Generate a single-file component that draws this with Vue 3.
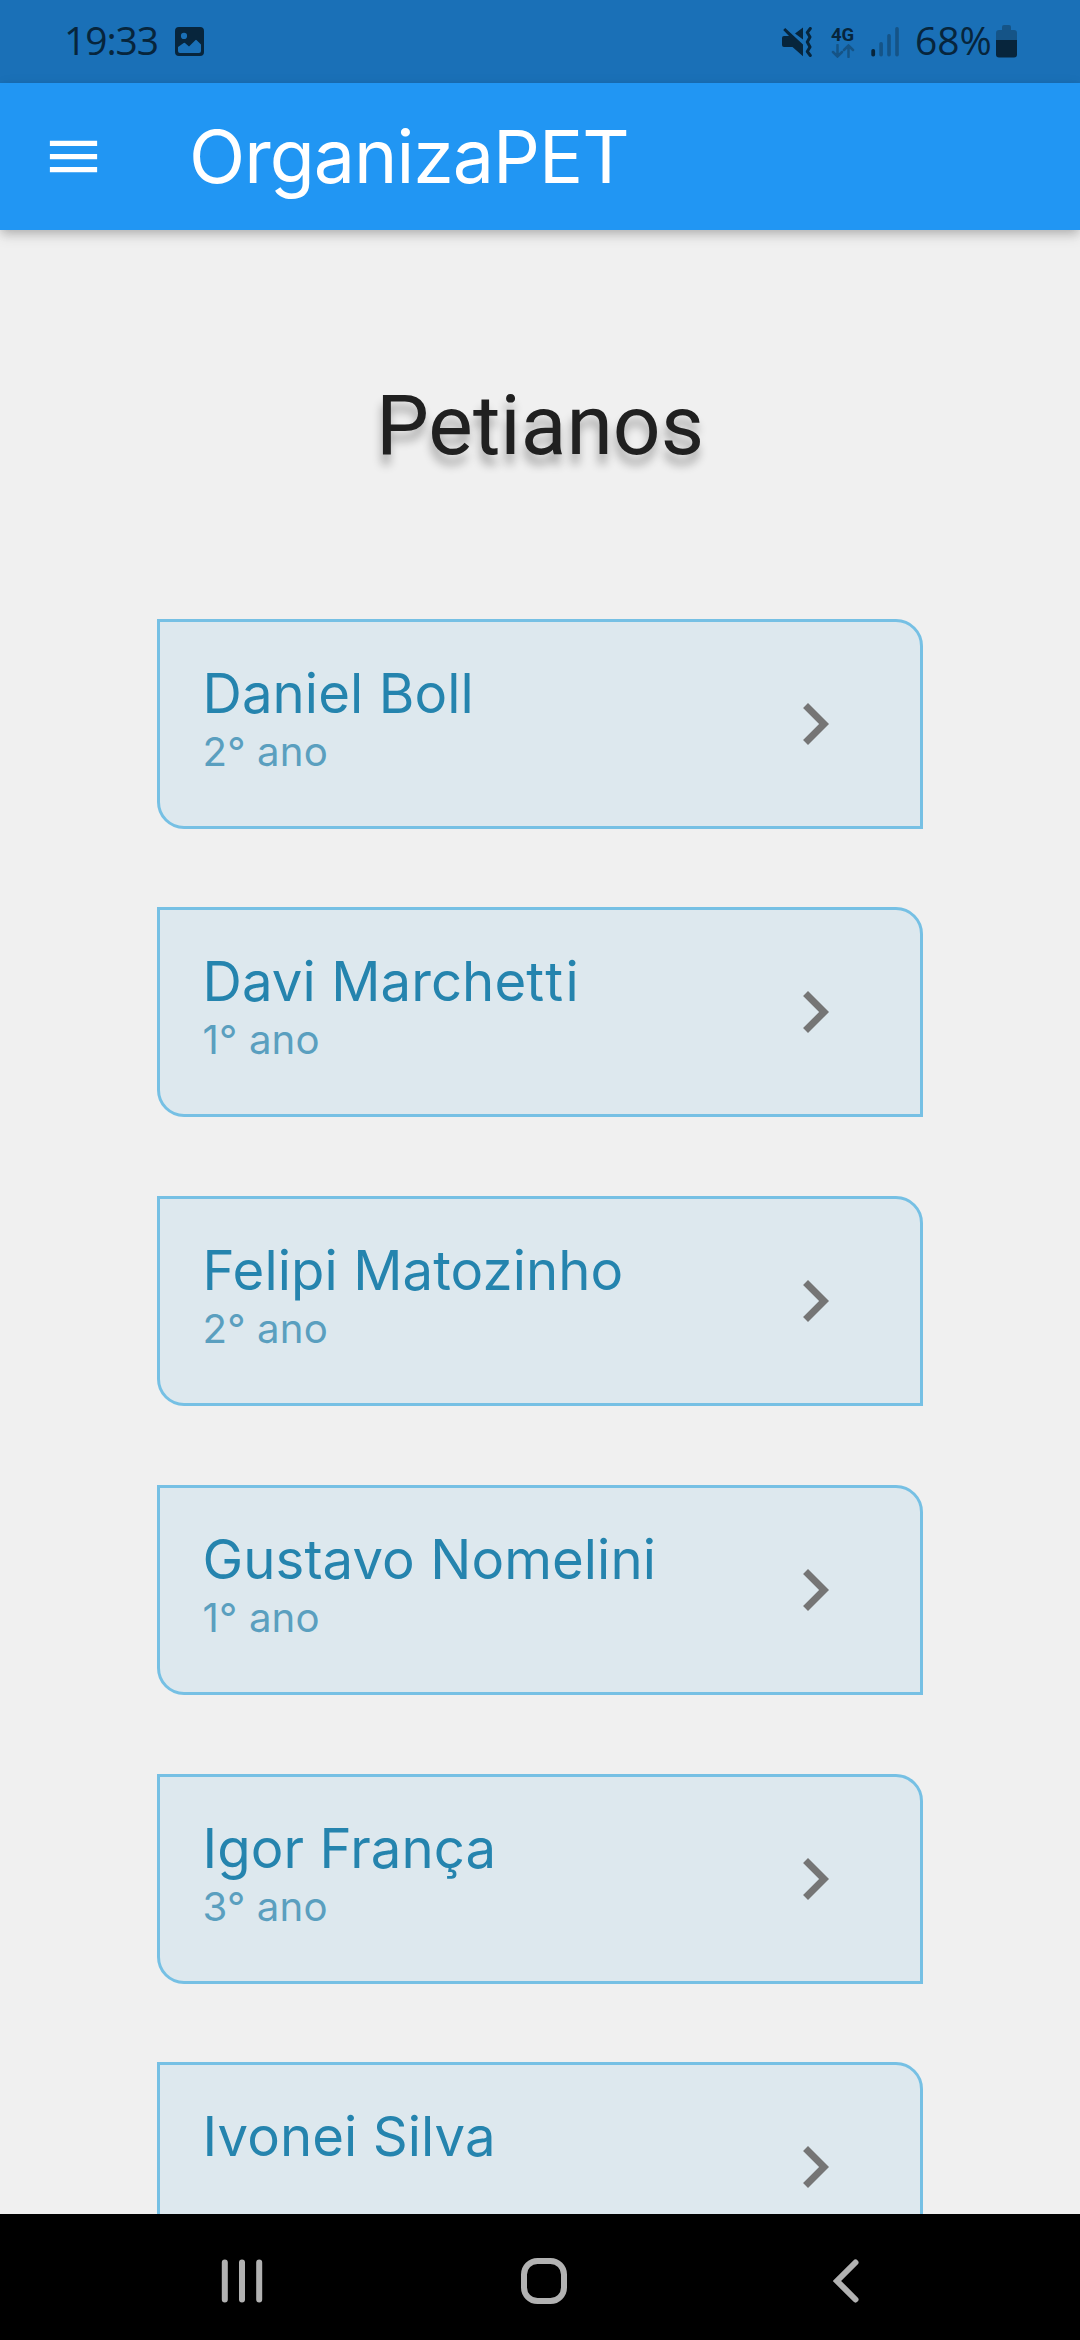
<script setup>
const people = [
  { name: ['Daniel Boll'], year: '2° ano' },
  { name: ['Davi Marche', 'tt', 'i'], year: '1° ano' },
  { name: ['Felipi Matozinho'], year: '2° ano' },
  { name: ['Gustavo Nomelini'], year: '1° ano' },
  { name: ['Igor França'], year: '3° ano' },
  { name: ['Ivonei Silva'], year: '' }
]
</script>

<template>
  <div class="screen">
    <header class="status">
      <span class="clock">19:33</span>
      <svg class="picture" width="30" height="30" viewBox="0 0 30 30">
        <path fill-rule="evenodd" d="M4 0h21a4 4 0 0 1 4 4v21a4 4 0 0 1-4 4H4a4 4 0 0 1-4-4V4a4 4 0 0 1 4-4zM9 5.8a3.1 3.1 0 1 0 0 6.2a3.1 3.1 0 1 0 0-6.2zM3 20v4a2 2 0 0 0 2 2h19a2 2 0 0 0 2-2v-6.5l-4.3-4.3a1 1 0 0 0-1.4 0L14 19.500l-4-3.500a1 1 0 0 0-1.300 0z" />
      </svg>
      <span class="spacer"></span>
      <svg class="mute" width="30" height="30" viewBox="0 0 30 30">
        <path d="M0 11a2 2 0 0 1 2-2h5L1.200 3 3.200 1 21 17.500V29.200L10.500 20H2a2 2 0 0 1-2-2zM21 0.500V12.500L13 6.500z" />
        <path class="wave" d="M28.300 1.500L25.300 5.500L28 10L25.300 15L28 20L25.300 24.500L28.300 28.500" />
      </svg>
      <div class="network">
        <span class="gen">4G</span>
        <svg width="24" height="14" viewBox="0 0 24 14">
          <path class="arrows" d="M6.500 1v11M2 8l4.500 4.500L11 8M17.500 13V2M13 6l4.500-4.500L22 6" />
        </svg>
      </div>
      <svg class="signal" width="29" height="30" viewBox="0 0 29 30">
        <rect x="0.300" y="22" width="3.800" height="7.500" rx="1.700" />
        <g class="faint">
          <rect x="8.300" y="15" width="3.600" height="14.500" rx="1.700" />
          <rect x="16.200" y="7" width="3.600" height="22.500" rx="1.700" />
          <rect x="24.200" y="0" width="3.600" height="29.500" rx="1.700" />
        </g>
      </svg>
      <span class="percent">68%</span>
      <svg class="battery" width="21" height="33" viewBox="0 0 21 33">
        <path class="faint" d="M6 2a2 2 0 0 1 2-2h5a2 2 0 0 1 2 2v3h3a3 3 0 0 1 3 3v8H0V8a3 3 0 0 1 3-3h3z" />
        <path d="M0 15h21v14.500a3 3 0 0 1-3 3H3a3 3 0 0 1-3-3z" />
      </svg>
    </header>

    <nav class="appbar">
      <svg width="63" height="63" viewBox="0 0 24 24"><path d="M3 18h18v-2H3v2zm0-5h18v-2H3v2zm0-7v2h18V6H3z" /></svg>
      <span class="brand">OrganizaPET</span>
    </nav>

    <main class="content">
      <h1>Petianos</h1>
      <ul class="list">
        <li v-for="p in people" :key="p.name[0]" class="card">
          <div class="info">
            <div class="name"><span v-for="(part, i) in p.name" :key="i" :class="{ loose: part === 'tt' }">{{ part }}</span></div>
            <div class="year">{{ p.year }}</div>
          </div>
          <svg width="84" height="84" viewBox="0 0 24 24"><path d="M10 6L8.590 7.410 13.170 12l-4.580 4.590L10 18l6-6z" /></svg>
        </li>
      </ul>
    </main>

    <footer class="navbar">
      <svg width="42" height="46" viewBox="0 0 42 46"><path d="M3.800 4.500v37M21 4.500v37M38.200 4.500v37" /></svg>
      <svg class="home" width="46" height="46" viewBox="0 0 46 46"><rect x="3" y="3" width="40" height="40" rx="13.500" /></svg>
      <svg class="back" width="28" height="46" viewBox="0 0 28 46"><path d="M23.500 4.500L5 23l18.500 18.500" /></svg>
    </footer>
  </div>
</template>

<style>
body {
  background: #f0f0f0;
}
</style>

<style scoped>
.screen {
  display: flex;
  flex-direction: column;
  width: 1080px;
  height: 2340px;
  overflow: hidden;
  background: #f0f0f0;
  font-family: Inter, sans-serif;
}
.status {
  display: flex;
  align-items: center;
  flex: none;
  box-sizing: border-box;
  height: 83px;
  padding: 0 63px 0 64px;
  background: #1a70b7;
  color: #07253c;
  fill: #07253c;
}
.status svg {
  display: block;
}
.clock,
.percent {
  font: 400 39px/54px "Open Sans", sans-serif;
  letter-spacing: -1.100px;
  white-space: nowrap;
  margin-top: -4px;
}
.clock {
  width: 111px;
}
.spacer {
  flex: 1;
}
.wave {
  fill: none;
  stroke: #07253c;
  stroke-width: 3;
  stroke-linecap: round;
  stroke-linejoin: round;
}
.network {
  display: flex;
  flex-direction: column;
  width: 25px;
  margin-left: 19px;
  margin-top: 1px;
}
.gen {
  font: 700 18.500px/18px Roboto, sans-serif;
}
.arrows {
  fill: none;
  stroke: #155487;
  stroke-width: 2.500;
  stroke-linecap: round;
}
.signal {
  margin-left: 15px;
}
.faint {
  fill: #155487;
}
.percent {
  width: 81px;
  margin-left: 15px;
  letter-spacing: 0;
}
.appbar {
  display: flex;
  align-items: center;
  flex: none;
  position: relative;
  z-index: 1;
  height: 147px;
  padding-left: 42px;
  background: #2196f3;
  color: #fff;
  fill: #fff;
  box-shadow: 0 4px 9px -2px rgba(0, 0, 0, 0.18), 0 8px 12px rgba(0, 0, 0, 0.08), 0 2px 14px rgba(0, 0, 0, 0.06);
}
.brand {
  margin-left: 84px;
  font-size: 73.500px;
  line-height: 89px;
  letter-spacing: -1px;
}
.content {
  flex: 1;
  min-height: 0;
  overflow: hidden;
}
h1 {
  margin: 146.600px 0 144.100px;
  font: 400 84px/98px Roboto, sans-serif;
  text-align: center;
  color: #202020;
  text-shadow: -1px 10px 10px rgba(0, 0, 0, 0.3);
}
.list {
  display: flex;
  flex-direction: column;
  gap: 78.750px;
  margin: 0 157px;
  padding: 0;
  list-style: none;
}
.card {
  display: flex;
  align-items: center;
  justify-content: space-between;
  box-sizing: border-box;
  height: 210px;
  padding: 0 63px 0 42.500px;
  border: 3px solid #76c0e4;
  border-radius: 0 27px;
  background: #dde8ee;
  fill: #757575;
}
.info {
  align-self: flex-start;
  padding-top: 39px;
}
.name {
  font-size: 54.500px;
  line-height: 64px;
  letter-spacing: 0.080px;
  color: #2584ae;
}
.loose {
  letter-spacing: 2.400px;
}
.year {
  margin-top: 3px;
  font-size: 40.200px;
  line-height: 48px;
  letter-spacing: 0.150px;
  color: #5a9fbf;
}
.navbar {
  display: flex;
  align-items: center;
  flex: none;
  box-sizing: border-box;
  height: 126px;
  padding: 7px 0 0 220.500px;
  background: #000;
}
.navbar svg {
  fill: none;
  stroke: #b2b2b2;
  stroke-width: 6;
  stroke-linecap: round;
}
.home {
  margin-left: 258.200px;
}
.back {
  margin-left: 265.300px;
}
</style>
